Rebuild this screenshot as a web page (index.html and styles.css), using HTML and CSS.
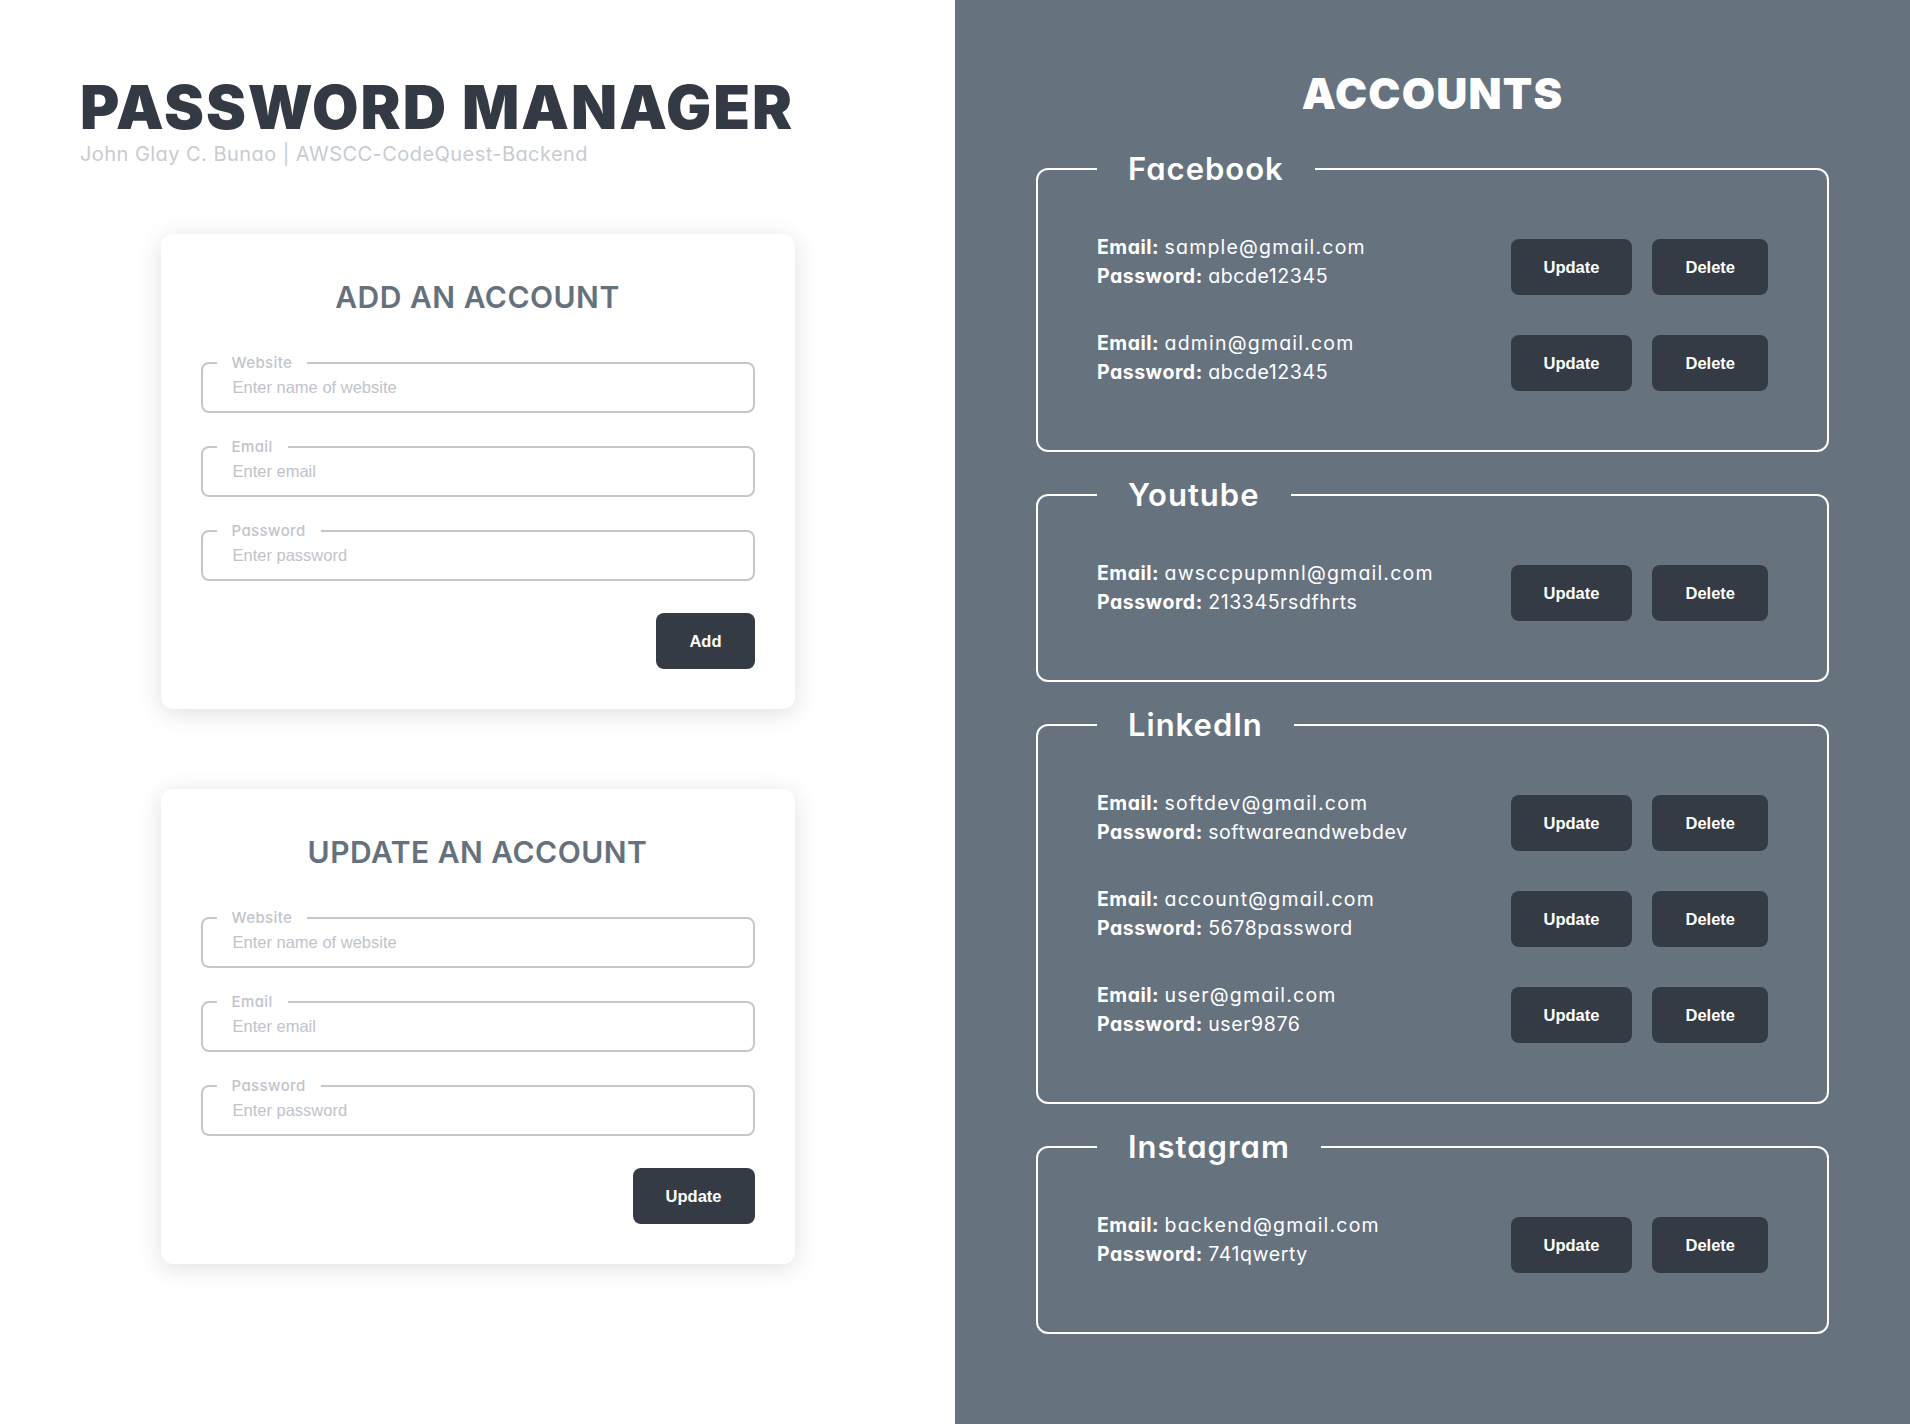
FILE: index.html
```html
<!DOCTYPE html>
<html lang="en">
<head>
<meta charset="utf-8">
<title>Password Manager</title>
<link rel="stylesheet" href="styles.css">
</head>
<body>
<div class="page">
  <section class="left">
    <header class="brand">
      <h1 class="brand-title">PASSWORD MANAGER</h1>
      <p class="brand-sub">John Glay C. Bunao | AWSCC-CodeQuest-Backend</p>
    </header>
    <div class="forms">
      <form class="card">
        <h2 class="card-title">ADD AN ACCOUNT</h2>
        <fieldset class="field"><legend>Website</legend><input type="text" placeholder="Enter name of website"></fieldset>
        <fieldset class="field"><legend>Email</legend><input type="text" placeholder="Enter email"></fieldset>
        <fieldset class="field"><legend>Password</legend><input type="text" placeholder="Enter password"></fieldset>
        <div class="card-actions"><button class="btn" type="button">Add</button></div>
      </form>
      <form class="card">
        <h2 class="card-title">UPDATE AN ACCOUNT</h2>
        <fieldset class="field"><legend>Website</legend><input type="text" placeholder="Enter name of website"></fieldset>
        <fieldset class="field"><legend>Email</legend><input type="text" placeholder="Enter email"></fieldset>
        <fieldset class="field"><legend>Password</legend><input type="text" placeholder="Enter password"></fieldset>
        <div class="card-actions"><button class="btn" type="button">Update</button></div>
      </form>
    </div>
  </section>
  <section class="right">
    <h2 class="accounts-title">ACCOUNTS</h2>
    <div class="groups">
      <fieldset class="group"><legend>Facebook</legend>
        <div class="entry">
          <div class="entry-info"><p><b>Email:</b> <span class="v-mail">sample@gmail.com</span></p><p><b>Password:</b> <span class="v-pass">abcde12345</span></p></div>
          <div class="entry-actions"><button class="btn" type="button">Update</button><button class="btn" type="button">Delete</button></div>
        </div>
        <div class="entry">
          <div class="entry-info"><p><b>Email:</b> <span class="v-mail">admin@gmail.com</span></p><p><b>Password:</b> <span class="v-pass">abcde12345</span></p></div>
          <div class="entry-actions"><button class="btn" type="button">Update</button><button class="btn" type="button">Delete</button></div>
        </div>
      </fieldset>
      <fieldset class="group"><legend>Youtube</legend>
        <div class="entry">
          <div class="entry-info"><p><b>Email:</b> <span class="v-mail">awsccpupmnl@gmail.com</span></p><p><b>Password:</b> <span class="v-pass">213345rsdfhrts</span></p></div>
          <div class="entry-actions"><button class="btn" type="button">Update</button><button class="btn" type="button">Delete</button></div>
        </div>
      </fieldset>
      <fieldset class="group"><legend>LinkedIn</legend>
        <div class="entry">
          <div class="entry-info"><p><b>Email:</b> <span class="v-mail">softdev@gmail.com</span></p><p><b>Password:</b> <span class="v-pass">softwareandwebdev</span></p></div>
          <div class="entry-actions"><button class="btn" type="button">Update</button><button class="btn" type="button">Delete</button></div>
        </div>
        <div class="entry">
          <div class="entry-info"><p><b>Email:</b> <span class="v-mail">account@gmail.com</span></p><p><b>Password:</b> <span class="v-pass">5678password</span></p></div>
          <div class="entry-actions"><button class="btn" type="button">Update</button><button class="btn" type="button">Delete</button></div>
        </div>
        <div class="entry">
          <div class="entry-info"><p><b>Email:</b> <span class="v-mail">user@gmail.com</span></p><p><b>Password:</b> <span class="v-pass">user9876</span></p></div>
          <div class="entry-actions"><button class="btn" type="button">Update</button><button class="btn" type="button">Delete</button></div>
        </div>
      </fieldset>
      <fieldset class="group"><legend>Instagram</legend>
        <div class="entry">
          <div class="entry-info"><p><b>Email:</b> <span class="v-mail">backend@gmail.com</span></p><p><b>Password:</b> <span class="v-pass">741qwerty</span></p></div>
          <div class="entry-actions"><button class="btn" type="button">Update</button><button class="btn" type="button">Delete</button></div>
        </div>
      </fieldset>
    </div>
  </section>
</div>
</body>
</html>
```

FILE: styles.css
```css
* { box-sizing: border-box; }

body {
  margin: 0;
  font-family: Inter, "Noto Sans", sans-serif;
  font-feature-settings: "cv11";
}

.page {
  display: grid;
  grid-template-columns: 955px 955px;
  min-height: 1424px;
}

/* ---------- left column ---------- */
.left {
  background: #ffffff;
  padding-top: 77px;
}

.brand { padding-left: 80px; }

.brand-title {
  margin: 0;
  font-size: 60px;
  line-height: 60px;
  font-weight: 900;
  color: #343a43;
  letter-spacing: 2px;
}

.brand-sub {
  margin: 7px 0 0;
  font-size: 20px;
  line-height: 20px;
  color: #c8cbd1;
  letter-spacing: 0.45px;
}

.forms {
  width: 634px;
  margin: 70px auto 0;
  display: flex;
  flex-direction: column;
  gap: 80px;
}

.card {
  background: #ffffff;
  border-radius: 12px;
  box-shadow: 0 4px 24px rgba(0, 0, 0, 0.13);
  padding: 48px 40px 40px;
}

.card-title {
  margin: 0 0 44px;
  text-align: center;
  font-size: 30px;
  line-height: 30px;
  font-weight: 600;
  color: #65717d;
  letter-spacing: 0.5px;
}

.field {
  margin: 0;
  padding: 0 14px 7px;
  border: 2px solid #c4c7cd;
  border-radius: 8px;
  min-inline-size: 0;
}

.field + .field { margin-top: 27px; }

.field legend {
  padding: 0 15px;
  font-size: 15px;
  line-height: 14px;
  font-weight: 500;
  color: #c1c4cb;
  letter-spacing: 0.4px;
}

.field input {
  display: block;
  width: 100%;
  height: 34px;
  border: 0;
  outline: 0;
  padding: 0 16px;
  background: transparent;
  font-family: "Liberation Sans", Arial, sans-serif;
  font-size: 16.5px;
  color: #343a43;
}

.field input::placeholder { color: #c0c3ca; }

.card-actions {
  display: flex;
  justify-content: flex-end;
  margin-top: 32px;
}

.btn {
  height: 56px;
  padding: 0 33px;
  border: 0;
  border-radius: 8px;
  background: #343b44;
  color: #ffffff;
  font-family: "Liberation Sans", Arial, sans-serif;
  font-weight: 700;
  font-size: 16.5px;
  cursor: pointer;
}

/* ---------- right column ---------- */
.right {
  background: #66737f;
  padding-top: 72px;
}

.accounts-title {
  margin: 0;
  text-align: center;
  color: #ffffff;
  font-size: 43px;
  line-height: 43px;
  font-weight: 900;
  letter-spacing: 1.2px;
}

.groups {
  width: 793px;
  margin: 38px auto 0;
  display: flex;
  flex-direction: column;
  gap: 27px;
}

.group {
  margin: 0;
  border: 2px solid #ffffff;
  border-radius: 12px;
  padding: 55px 59px 59px;
  min-inline-size: 0;
}

.group legend {
  padding: 0 31px;
  font-size: 31px;
  line-height: 31px;
  font-weight: 600;
  color: #ffffff;
  letter-spacing: 1px;
}

.entry {
  display: flex;
  align-items: center;
  justify-content: space-between;
}

.entry + .entry { margin-top: 40px; }

.entry-info {
  margin-top: -11px;
  color: #ffffff;
  font-size: 19.5px;
  line-height: 29px;
}

.entry-info p { margin: 0; }
.entry-info b { font-weight: 700; letter-spacing: 0.5px; }
.entry-info .v-mail { letter-spacing: 1.2px; }
.entry-info .v-pass { letter-spacing: 0.6px; }

.entry-actions {
  display: flex;
  gap: 20px;
}
```
